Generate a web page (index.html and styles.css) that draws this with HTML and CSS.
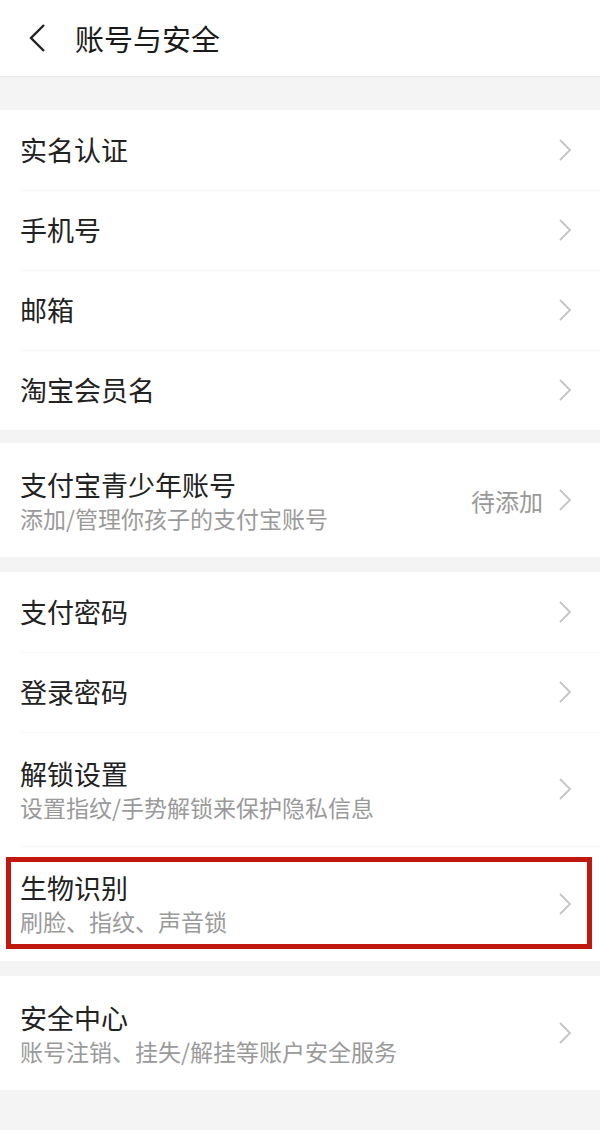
FILE: index.html
```html
<!DOCTYPE html>
<html>
<head>
  <title>账号与安全</title>
  <link rel="stylesheet" href="styles.css">
</head>
<body>
  <div class="header">
    <svg class="back" width="20" height="30" viewBox="0 0 20 30"><path d="M17 2 L4 15 L17 28" fill="none" stroke="#222" stroke-width="2.4"/></svg>
    <span class="title">账号与安全</span>
  </div>

  <div class="group first">
    <div class="row"><span class="label">实名认证</span><svg class="arrow" width="14" height="24" viewBox="0 0 14 24"><path d="M2 2 L12 12 L2 22" fill="none" stroke="#c4c4c4" stroke-width="1.8"/></svg></div>
    <div class="row"><span class="label">手机号</span><svg class="arrow" width="14" height="24" viewBox="0 0 14 24"><path d="M2 2 L12 12 L2 22" fill="none" stroke="#c4c4c4" stroke-width="1.8"/></svg></div>
    <div class="row"><span class="label">邮箱</span><svg class="arrow" width="14" height="24" viewBox="0 0 14 24"><path d="M2 2 L12 12 L2 22" fill="none" stroke="#c4c4c4" stroke-width="1.8"/></svg></div>
    <div class="row"><span class="label">淘宝会员名</span><svg class="arrow" width="14" height="24" viewBox="0 0 14 24"><path d="M2 2 L12 12 L2 22" fill="none" stroke="#c4c4c4" stroke-width="1.8"/></svg></div>
  </div>

  <div class="group">
    <div class="row tall">
      <div class="text">
        <div class="label">支付宝青少年账号</div>
        <div class="sub">添加/管理你孩子的支付宝账号</div>
      </div>
      <span class="value">待添加</span>
      <svg class="arrow" width="14" height="24" viewBox="0 0 14 24"><path d="M2 2 L12 12 L2 22" fill="none" stroke="#c4c4c4" stroke-width="1.8"/></svg>
    </div>
  </div>

  <div class="group">
    <div class="row"><span class="label">支付密码</span><svg class="arrow" width="14" height="24" viewBox="0 0 14 24"><path d="M2 2 L12 12 L2 22" fill="none" stroke="#c4c4c4" stroke-width="1.8"/></svg></div>
    <div class="row"><span class="label">登录密码</span><svg class="arrow" width="14" height="24" viewBox="0 0 14 24"><path d="M2 2 L12 12 L2 22" fill="none" stroke="#c4c4c4" stroke-width="1.8"/></svg></div>
    <div class="row tall">
      <div class="text">
        <div class="label">解锁设置</div>
        <div class="sub">设置指纹/手势解锁来保护隐私信息</div>
      </div>
      <svg class="arrow" width="14" height="24" viewBox="0 0 14 24"><path d="M2 2 L12 12 L2 22" fill="none" stroke="#c4c4c4" stroke-width="1.8"/></svg>
    </div>
    <div class="row tall marked">
      <div class="text">
        <div class="label">生物识别</div>
        <div class="sub">刷脸、指纹、声音锁</div>
      </div>
      <svg class="arrow" width="14" height="24" viewBox="0 0 14 24"><path d="M2 2 L12 12 L2 22" fill="none" stroke="#c4c4c4" stroke-width="1.8"/></svg>
      <div class="highlight"></div>
    </div>
  </div>

  <div class="group">
    <div class="row tall">
      <div class="text">
        <div class="label">安全中心</div>
        <div class="sub">账号注销、挂失/解挂等账户安全服务</div>
      </div>
      <svg class="arrow" width="14" height="24" viewBox="0 0 14 24"><path d="M2 2 L12 12 L2 22" fill="none" stroke="#c4c4c4" stroke-width="1.8"/></svg>
    </div>
  </div>
</body>
</html>
```

FILE: styles.css
```css
body {
  margin: 0;
  background-color: #f4f4f4;
  font-family: "Noto Sans CJK SC", "Noto Sans", sans-serif;
  color: #222;
}

.header {
  height: 76px;
  background-color: #fff;
  border-bottom: 1px solid #e8e8e8;
  display: flex;
  align-items: center;
  padding-left: 27px;
}

.back {
  margin-right: 28px;
}

.title {
  font-size: 29px;
  color: #1a1a1a;
}

.group {
  background-color: #fff;
  margin-top: 13px;
}

.group.first {
  margin-top: 33px;
}

.group + .group + .group {
  margin-top: 15px;
}

.row {
  position: relative;
  display: flex;
  align-items: center;
  height: 80px;
  padding: 0 28px 0 20px;
  box-sizing: border-box;
}

.row + .row::before {
  content: "";
  position: absolute;
  top: 0;
  left: 20px;
  right: 0;
  height: 1px;
  background-color: #f8f8f8;
}

.row.tall {
  height: 114px;
}

.row.marked {
  height: 115px;
}

.text {
  flex: 1;
  padding-top: 1px;
}

.label {
  flex: 1;
  font-size: 27px;
  line-height: 34px;
  color: #222;
}

.sub {
  font-size: 23px;
  line-height: 32px;
  color: #9a9a9a;
}

.value {
  font-size: 24px;
  color: #999;
  margin-right: 15px;
}

.arrow {
  flex: none;
}

.highlight {
  position: absolute;
  top: 11px;
  bottom: 12px;
  left: 6px;
  right: 8px;
  border: 5px solid #c0180f;
}
```
